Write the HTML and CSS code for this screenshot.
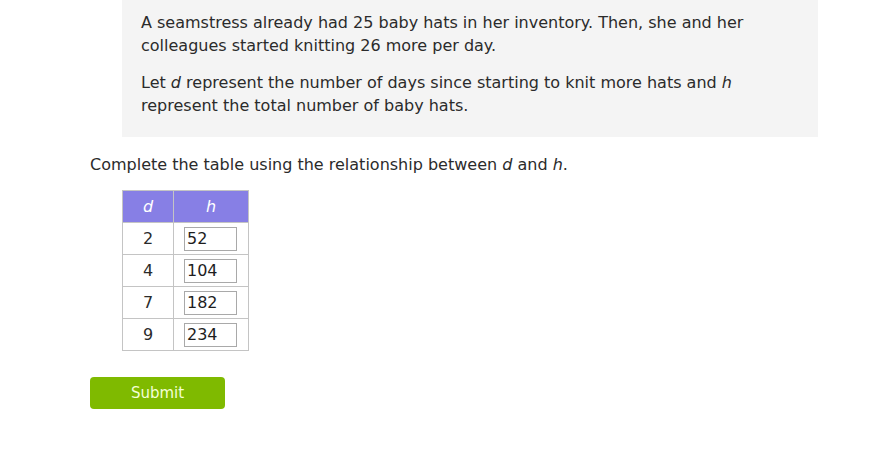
FILE: index.html
```html
<!DOCTYPE html>
<html>
<head>
<meta charset="utf-8">
<link rel="stylesheet" href="styles.css">
</head>
<body>
<main class="page">
  <section class="problem">
    <p>A seamstress already had 25 baby hats in her inventory. Then, she and her colleagues started knitting 26 more per day.</p>
    <p>Let <i>d</i> represent the number of days since starting to knit more hats and <i>h</i> represent the total number of baby hats.</p>
  </section>
  <p class="prompt">Complete the table using the relationship between <i>d</i> and <i>h</i>.</p>
  <table class="values">
    <thead>
      <tr><th class="col-d"><i>d</i></th><th class="col-h"><i>h</i></th></tr>
    </thead>
    <tbody>
      <tr><td>2</td><td><span class="answer">52</span></td></tr>
      <tr><td>4</td><td><span class="answer">104</span></td></tr>
      <tr><td>7</td><td><span class="answer">182</span></td></tr>
      <tr><td>9</td><td><span class="answer">234</span></td></tr>
    </tbody>
  </table>
  <button class="submit">Submit</button>
</main>
</body>
</html>
```
FILE: styles.css
```css
html, body {
  margin: 0;
  padding: 0;
  background: #ffffff;
}
body {
  font-family: "DejaVu Sans", sans-serif;
  font-size: 16px;
  line-height: 23px;
  color: #2b2b2b;
}
.page {
  padding-left: 90px;
  display: flex;
  flex-direction: column;
  align-items: flex-start;
}
.problem {
  margin-left: 32px;
  width: 696px;
  box-sizing: border-box;
  padding: 11px 19px 20px;
  background: #f4f4f4;
}
.problem p {
  margin: 0;
}
.problem p + p {
  margin-top: 14px;
}
.prompt {
  margin: 16px 0 14px;
}
.values {
  margin-left: 32px;
  border-collapse: collapse;
}
.values th,
.values td {
  border: 1px solid #c4c4c4;
  padding: 0;
  height: 31px;
  text-align: center;
  vertical-align: middle;
}
.values th {
  background: #877fe5;
  color: #ffffff;
  font-weight: normal;
}
.col-d { width: 50px; }
.col-h { width: 74px; }
.answer {
  display: block;
  box-sizing: border-box;
  width: 53px;
  height: 24px;
  margin: 0 0 0 10px;
  border: 1px solid #a9a9a9;
  background: #fff;
  text-align: left;
  padding-left: 2px;
  line-height: 22px;
  color: #1e1e1e;
}
.submit {
  margin-top: 26px;
  width: 135px;
  height: 32px;
  border: none;
  border-radius: 4px;
  background: #7fba00;
  color: #f4ffd6;
  font-family: "DejaVu Sans", sans-serif;
  font-size: 15px;
  padding: 0;
}
```
